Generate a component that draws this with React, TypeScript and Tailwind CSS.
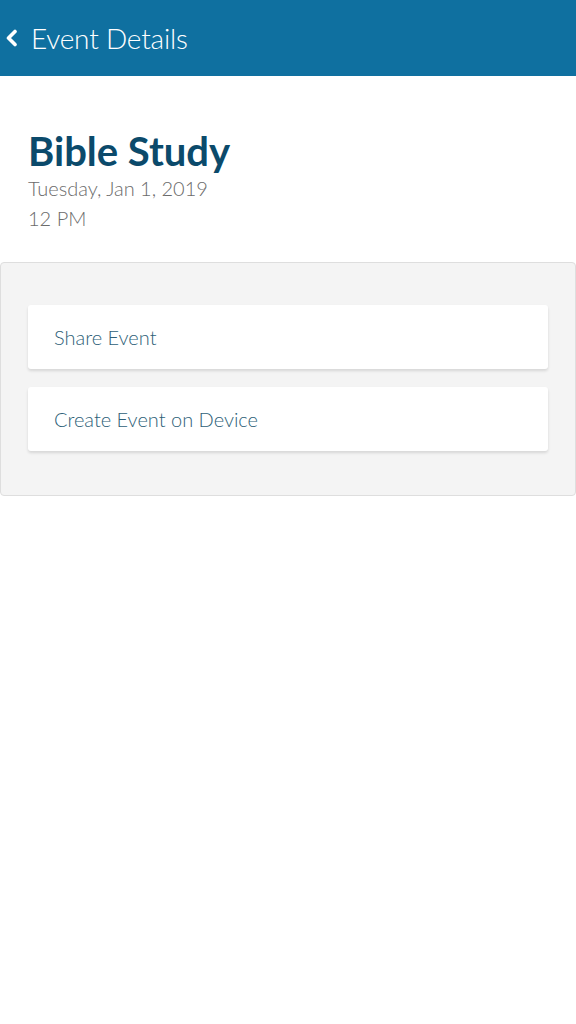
const actions = ["Share Event", "Create Event on Device"];

export default function App() {
  return (
    <div className="min-h-screen bg-white font-['Lato','Open_Sans',sans-serif]">
      {/* header */}
      <header className="flex h-[76px] items-center bg-[#0f70a0] pl-[4px] text-white">
        <svg width="14" height="18" viewBox="0 0 14 18" className="shrink-0">
          <polyline points="11,2.5 4.5,9 11,15.5" fill="none" stroke="white" strokeWidth="3.6" strokeLinecap="round" strokeLinejoin="round" />
        </svg>
        <h1 className="ml-[13px] text-[28px] font-light tracking-[-0.2px]">Event Details</h1>
      </header>

      {/* event info */}
      <section className="px-[28px] pt-[51px] pb-[29px]">
        <h2 className="text-[40px] font-bold leading-[48px] text-[#0b4a6b]">Bible Study</h2>
        <p className="-mt-[2px] text-[20px] font-light leading-[30px] text-[#6b6b6b]">Tuesday, Jan 1, 2019</p>
        <p className="text-[20px] font-light leading-[30px] text-[#6b6b6b]">12 PM</p>
      </section>

      {/* actions */}
      <section className="flex flex-col gap-[18px] rounded-[4px] border border-[#dedede] bg-[#f4f4f4] px-[27px] pt-[42px] pb-[44px]">
        {actions.map((label) => (
          <button
            key={label}
            className="flex h-[64px] items-center rounded-[3px] bg-white px-[26px] text-left text-[20px] font-light text-[#2e5f78] shadow-[0_2px_3px_rgba(0,0,0,0.12)]"
          >
            {label}
          </button>
        ))}
      </section>
    </div>
  );
}
